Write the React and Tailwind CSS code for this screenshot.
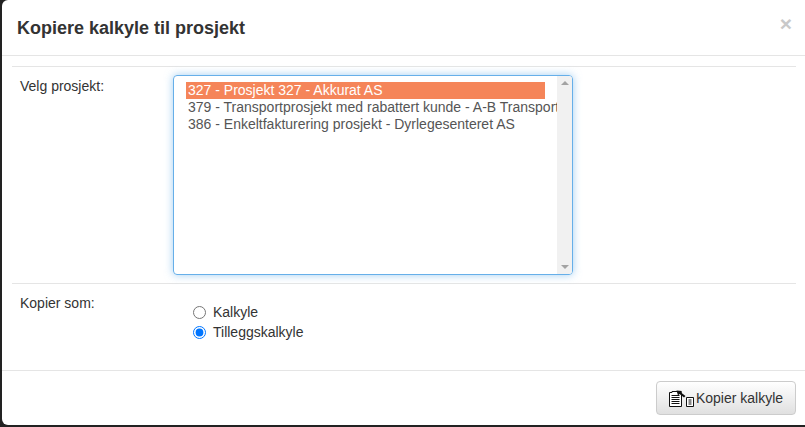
function CopyIcon() {
  return (
    <svg width="27" height="18" viewBox="0 0 27 18" className="shrink-0" fill="none">
      <path d="M0.5 3.5H3V2.5H9V3.5H12.5V17.5H0.5Z" fill="#fff" stroke="#111" />
      <path d="M2.5 6.5H10.5M2.5 8.5H10.5M2.5 10.5H10.5M2.5 12.5H10.5M2.5 14.5H10.5" stroke="#111" />
      <path d="M7.5 1.5L13 2L12 3.5L16.5 7L15 8.5L10.5 5L9 6.5Z" fill="#111" />
      <path d="M17.5 8.5H24.5V17.5H17.5Z" fill="#fff" stroke="#111" />
      <path d="M19.5 11H22.5M19.5 13H22.5M19.5 15H22.5" stroke="#111" />
    </svg>
  );
}

function App() {
  const projects = [
    "327 - Prosjekt 327 - Akkurat AS",
    "379 - Transportprosjekt med rabattert kunde - A-B Transport",
    "386 - Enkeltfakturering prosjekt - Dyrlegesenteret AS",
  ];

  return (
    <div className="h-[427px] w-[805px] overflow-hidden bg-[#222222] pb-[2px] pl-[2px] font-['Liberation_Sans',sans-serif] text-[14px] leading-[20px] text-[#333333]">
      <div className="flex h-full flex-col rounded-l-[6px] bg-white">
        <div className="flex h-[56px] shrink-0 items-start justify-between border-b border-[#e5e5e5] pl-[15px] pr-[13px]">
          <h4 className="pt-[16px] text-[18px] font-bold leading-[24px]">Kopiere kalkyle til prosjekt</h4>
          <span className="pt-[12px] text-[21px] font-bold leading-[24px] text-[#c9c9c9]">×</span>
        </div>

        <div className="flex-1 px-[10px] pt-[10px]">
          <div className="mr-[-1px] flex h-[217px] border-t border-[#e5e5e5] pt-[8px]">
            <label className="w-[161px] pl-[8px] pt-px">Velg prosjekt:</label>
            <div className="flex h-[200px] w-[400px] overflow-hidden rounded-[4px] border border-[#66afe9] shadow-[0_0_8px_rgba(102,175,233,0.6)]">
              <div className="min-w-0 flex-1 overflow-hidden pl-[12px] pt-[6px] text-[#555555] leading-[17px]">
                {projects.map((p, i) => (
                  <div
                    key={p}
                    className={
                      i === 0
                        ? "w-[359px] whitespace-nowrap bg-[#f58559] pl-[2px] text-white"
                        : "whitespace-nowrap pl-[2px]"
                    }
                  >
                    {p}
                  </div>
                ))}
              </div>
              <div className="flex w-[15px] shrink-0 flex-col items-center justify-between bg-[#f1f1f1] py-[5px]">
                <div className="h-0 w-0 border-x-[4px] border-b-[4px] border-x-transparent border-b-[#a3a3a3]" />
                <div className="h-0 w-0 border-x-[4px] border-t-[4px] border-x-transparent border-t-[#a3a3a3]" />
              </div>
            </div>
          </div>

          <div className="mr-[-1px] flex border-t border-[#e5e5e5] pt-[8px]">
            <label className="w-[161px] pl-[8px] pt-px">Kopier som:</label>
            <div className="flex flex-col pt-[10px]">
              <label className="flex h-[20px] items-center gap-[7px] pl-[20px]">
                <input type="radio" name="type" className="m-0 h-[13px] w-[13px]" />
                Kalkyle
              </label>
              <label className="flex h-[20px] items-center gap-[7px] pl-[20px]">
                <input type="radio" name="type" defaultChecked className="m-0 h-[13px] w-[13px]" />
                Tilleggskalkyle
              </label>
            </div>
          </div>
        </div>

        <div className="flex h-[55px] shrink-0 items-start justify-end border-t border-[#e5e5e5] pr-[9px] pt-[10px]">
          <button className="flex h-[34px] w-[140px] items-center justify-center rounded-[4px] border border-[#cccccc] bg-gradient-to-b from-white to-[#e0e0e0] text-[#333333]">
            <CopyIcon />
            Kopier kalkyle
          </button>
        </div>
      </div>
    </div>
  );
}

export default App;
